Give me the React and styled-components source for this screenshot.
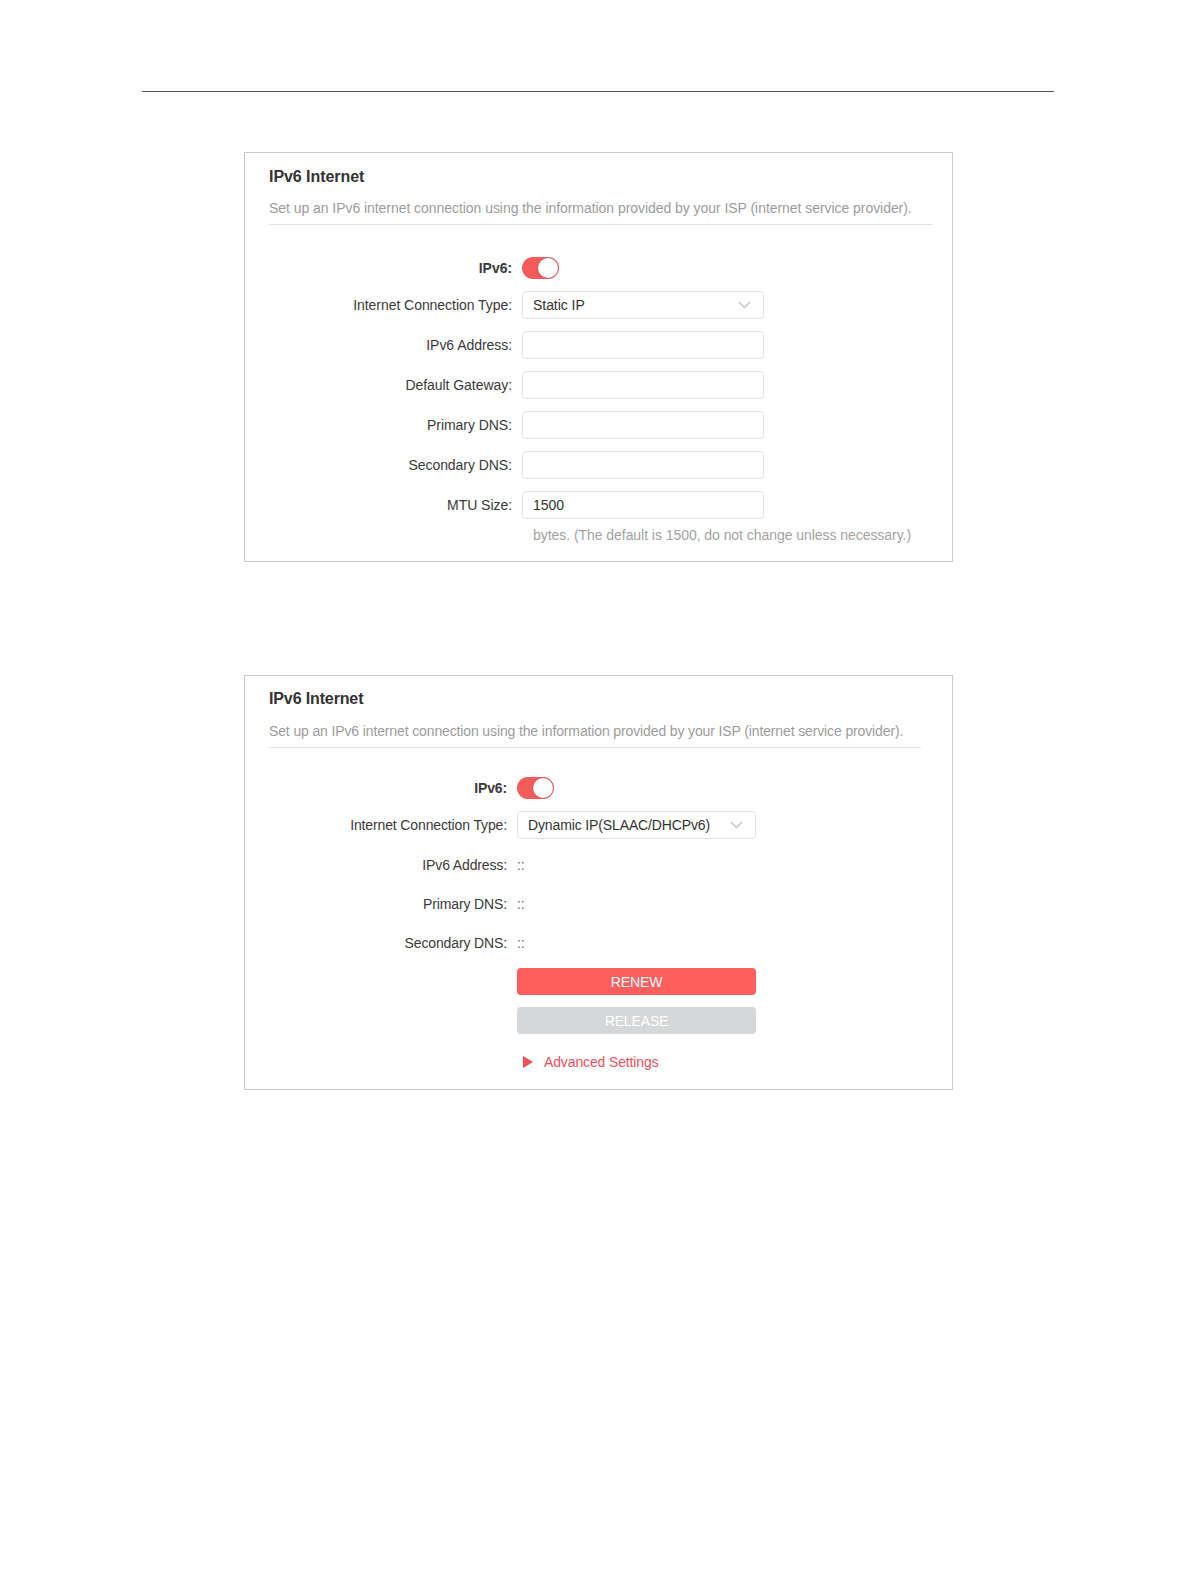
import React from "react"
import styled, { createGlobalStyle } from "styled-components"

const GlobalStyle = createGlobalStyle`
  body {
    margin: 0;
    background: #fff;
    font-family: "Liberation Sans", Arial, sans-serif;
    color: #333;
  }
`

const ChevronIcon = () => (
  <svg width="13" height="8" viewBox="0 0 13 8">
    <polyline points="1,1 6.5,6.5 12,1" fill="none" stroke="#c4c4c4" strokeWidth="1.4" />
  </svg>
)

const Toggle = () => (
  <ToggleTrack>
    <ToggleKnob />
  </ToggleTrack>
)

const Select = ({ value }) => (
  <SelectBox>
    <span>{value}</span>
    <ChevronIcon />
  </SelectBox>
)

const staticFields = ["IPv6 Address:", "Default Gateway:", "Primary DNS:", "Secondary DNS:"]
const dynamicFields = ["IPv6 Address:", "Primary DNS:", "Secondary DNS:"]

const App = () => {
  return (
    <Page>
      <GlobalStyle />
      <TopRule />

      <Panel $top={60} $padTop={14} $padBottom={17} $spacing={-0.05}>
        <Title>IPv6 Internet</Title>
        <Description $gap={11} $trim={20}>
          Set up an IPv6 internet connection using the information provided by your ISP (internet service provider).
        </Description>
        <Form $offset={32} $labelWidth={253}>
          <Row>
            <Label $bold>IPv6:</Label>
            <Toggle />
          </Row>
          <Row>
            <Label>Internet Connection Type:</Label>
            <Select value="Static IP" />
          </Row>
          {staticFields.map((f) => (
            <Row key={f}>
              <Label>{f}</Label>
              <Input />
            </Row>
          ))}
          <Row>
            <Label>MTU Size:</Label>
            <Input>1500</Input>
          </Row>
        </Form>
        <Note>bytes. (The default is 1500, do not change unless necessary.)</Note>
      </Panel>

      <Panel $top={113} $padTop={13} $padBottom={17} $spacing={-0.13}>
        <Title $light>IPv6 Internet</Title>
        <Description $gap={12} $trim={31}>
          Set up an IPv6 internet connection using the information provided by your ISP (internet service provider).
        </Description>
        <Form $offset={29} $labelWidth={248} $narrow>
          <Row>
            <Label $bold>IPv6:</Label>
            <Toggle />
          </Row>
          <Row>
            <Label>Internet Connection Type:</Label>
            <Select value="Dynamic IP(SLAAC/DHCPv6)" />
          </Row>
          {dynamicFields.map((f) => (
            <TextRow key={f}>
              <Label>{f}</Label>
              <Value>::</Value>
            </TextRow>
          ))}
          <Row>
            <Label />
            <Button>RENEW</Button>
          </Row>
          <Row>
            <Label />
            <Button $disabled>RELEASE</Button>
          </Row>
          <AdvancedRow>
            <Label />
            <Advanced>
              <Triangle />
              Advanced Settings
            </Advanced>
          </AdvancedRow>
        </Form>
      </Panel>
    </Page>
  )
}

const Page = styled.div`
  width: 1196px;
  min-height: 1582px;
  padding-top: 91px;
  box-sizing: border-box;
`
const TopRule = styled.div`
  margin-left: 142px;
  width: 912px;
  height: 1px;
  background: #555;
`
const Panel = styled.section`
  margin-top: ${(p) => p.$top}px;
  margin-left: 244px;
  width: 709px;
  box-sizing: border-box;
  border: 1px solid #c9c9c9;
  padding: ${(p) => p.$padTop}px 0 ${(p) => p.$padBottom}px 24px;
  letter-spacing: ${(p) => p.$spacing}px;
`
const Title = styled.h2`
  margin: 0;
  font-size: 16px;
  line-height: 20px;
  font-weight: ${(p) => (p.$light ? 600 : 700)};
  color: #333;
`
const Description = styled.p`
  margin: ${(p) => p.$gap}px ${(p) => p.$trim}px 0 0;
  padding-bottom: 6px;
  border-bottom: 1px solid #e4e4e4;
  font-size: 14px;
  line-height: 20px;
  color: #9c9c9c;
`
const Form = styled.div`
  margin-top: ${(p) => p.$offset}px;
  display: flex;
  flex-direction: column;
  gap: 12px;
  --label-width: ${(p) => p.$labelWidth}px;
  --field-width: ${(p) => (p.$narrow ? 239 : 242)}px;
`
const Row = styled.div`
  display: flex;
  align-items: center;
  min-height: 22px;
`
const TextRow = styled(Row)`
  height: 27px;
`
const AdvancedRow = styled(Row)`
  margin-top: 6px;
  height: 20px;
  min-height: 0;
`
const Label = styled.div`
  width: var(--label-width);
  flex-shrink: 0;
  box-sizing: border-box;
  padding-right: 10px;
  text-align: right;
  font-size: 14px;
  color: #3a3a3a;
  font-weight: ${(p) => (p.$bold ? 700 : 400)};
  white-space: nowrap;
`
const ToggleTrack = styled.div`
  width: 37px;
  height: 22px;
  border-radius: 11px;
  background: #f45b5b;
  display: flex;
  justify-content: flex-end;
  align-items: center;
  padding: 0 1px;
  box-sizing: border-box;
`
const ToggleKnob = styled.div`
  width: 20px;
  height: 20px;
  border-radius: 50%;
  background: #fff;
  box-shadow: 0 0 2px rgba(0, 0, 0, 0.25);
`
const fieldBase = `
  width: var(--field-width);
  height: 28px;
  box-sizing: border-box;
  border: 1px solid #e3e3e3;
  border-radius: 4px;
  background: #fff;
  font-size: 14px;
  color: #333;
  display: flex;
  align-items: center;
  padding: 0 10px;
`
const SelectBox = styled.div`
  ${fieldBase}
  justify-content: space-between;
  padding-right: 12px;
`
const Input = styled.div`
  ${fieldBase}
`
const Value = styled.div`
  font-size: 14px;
  color: #666;
`
const Note = styled.div`
  margin-top: 7px;
  padding-left: 264px;
  font-size: 14px;
  line-height: 18px;
  color: #a3a3a3;
`
const Button = styled.div`
  width: var(--field-width);
  height: 27px;
  border-radius: 4px;
  background: ${(p) => (p.$disabled ? "#d6d7d8" : "#fd5e5e")};
  color: #fff;
  font-size: 14px;
  display: flex;
  align-items: center;
  justify-content: center;
`
const Advanced = styled.div`
  display: flex;
  align-items: center;
  gap: 11px;
  padding-left: 6px;
  font-size: 14px;
  color: #f0505a;
`
const Triangle = styled.span`
  width: 0;
  height: 0;
  border-top: 6px solid transparent;
  border-bottom: 6px solid transparent;
  border-left: 10px solid #f0505a;
`

export default App
